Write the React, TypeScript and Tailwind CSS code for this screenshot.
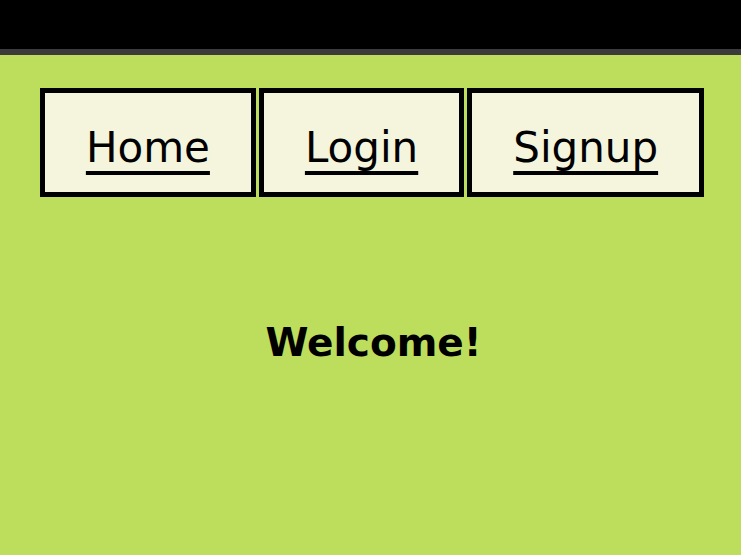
const links = ['Home', 'Login', 'Signup'];

export default function App() {
  return (
    <div
      className="min-h-[555px] bg-[#bddd5d] text-black"
      style={{ fontFamily: '"Comic Sans MS", "DejaVu Sans", sans-serif' }}
    >
      <header className="h-[55px] bg-black border-b-[6px] border-[#3b3b3b]" />

      <nav className="mt-[33px] flex justify-center gap-[3px] pl-[3px]">
        {links.map((label) => (
          <a
            key={label}
            href="#"
            className="block border-[5px] border-black bg-[#f4f5dc] px-[41px] pt-[21px] pb-[11px] text-[42px] leading-[67px] underline decoration-[4px] underline-offset-[9px] [text-decoration-skip-ink:none]"
          >
            {label}
          </a>
        ))}
      </nav>

      <h1 className="mt-[122px] pl-[6px] text-center text-[39px] font-bold leading-[47px]">
        Welcome!
      </h1>
    </div>
  );
}
